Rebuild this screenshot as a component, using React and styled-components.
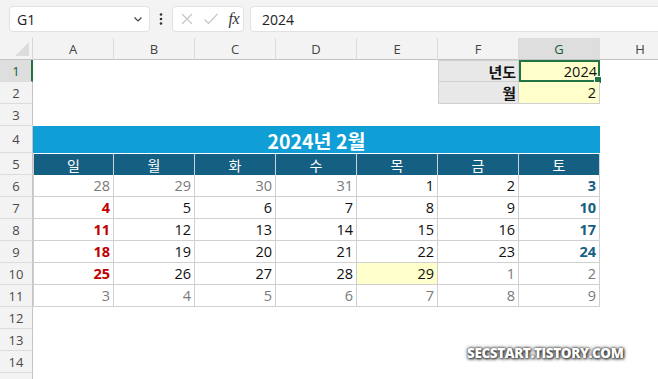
import React from 'react';
import styled, { createGlobalStyle, css } from 'styled-components';

const GlobalStyle = createGlobalStyle`
  html, body {
    margin: 0;
    padding: 0;
    background: #ffffff;
    overflow: hidden;
  }
  body {
    font-family: "Open Sans", "Noto Sans CJK KR", sans-serif;
  }
  * {
    box-sizing: border-box;
  }
`;

const Page = styled.div`
  position: relative;
  width: 658px;
  height: 379px;
  overflow: hidden;
  background: #ffffff;
`;

const Toolbar = styled.div`
  height: 38px;
  background: #f3f3f3;
  display: flex;
  align-items: center;
  padding-left: 9px;
`;

const NameBox = styled.div`
  width: 141px;
  height: 26px;
  background: #fff;
  border: 1px solid #e1e1e1;
  border-radius: 4px;
  display: flex;
  align-items: center;
  justify-content: space-between;
  padding: 0 5px 0 7px;
  font-size: 14px;
  color: #222;
`;

const Kebab = styled.div`
  width: 22px;
  display: flex;
  justify-content: center;
  color: #444;
`;

const FuncBox = styled.div`
  width: 72px;
  height: 26px;
  background: #fff;
  border: 1px solid #e1e1e1;
  border-radius: 4px;
  display: flex;
  align-items: center;
  justify-content: space-between;
  padding: 0 4px 0 7px;
`;

const FxLabel = styled.span`
  font-family: "Liberation Serif", serif;
  font-style: italic;
  font-size: 16px;
  color: #333;
  letter-spacing: -0.5px;
`;

const FormulaInput = styled.div`
  flex: 1;
  height: 26px;
  margin-left: 6px;
  margin-right: -12px;
  background: #fff;
  border: 1px solid #e1e1e1;
  border-radius: 4px;
  display: flex;
  align-items: center;
  padding-left: 11px;
  font-size: 14px;
  color: #222;
`;

const Sheet = styled.div`
  display: grid;
  grid-template-columns: 33px repeat(8, 81px);
  grid-template-rows: 22px 22px 22px 22px 27px repeat(11, 22px);
`;

const Corner = styled.div`
  background: #f3f3f3;
  border-bottom: 1px solid #c4c4c4;
  border-right: 1px solid #d6d6d6;
  position: relative;
  overflow: hidden;
  &::after {
    content: '';
    position: absolute;
    right: 3px;
    bottom: 3px;
    border-style: solid;
    border-width: 0 0 14px 14px;
    border-color: transparent transparent #dcdcdc transparent;
  }
`;

const ColHeader = styled.div`
  background: ${(p) => (p.$active ? '#dedede' : '#f3f3f3')};
  color: ${(p) => (p.$active ? '#185c37' : '#444')};
  border-bottom: 1px solid #c4c4c4;
  border-right: 1px solid #dcdcdc;
  font-size: 13px;
  display: flex;
  align-items: center;
  justify-content: center;
  padding-top: 1px;
`;

const RowHeader = styled.div`
  background: ${(p) => (p.$active ? '#dedede' : '#f3f3f3')};
  color: ${(p) => (p.$active ? '#185c37' : '#4a4a4a')};
  border-bottom: 1px solid #dcdcdc;
  border-right: ${(p) => (p.$active ? '2px solid #217346' : '1px solid #c4c4c4')};
  font-size: 13px;
  display: flex;
  align-items: center;
  justify-content: center;
  padding-left: ${(p) => (p.$active ? '1px' : '0')};
`;

const Cell = styled.div`
  position: relative;
  display: flex;
  align-items: center;
  justify-content: flex-end;
  padding-right: 3px;
  font-size: 14.5px;
  color: #111;
  background: ${(p) => p.$bg || 'transparent'};
  ${(p) =>
    p.$boxed &&
    css`
      border-right: 1px solid #d0d0d0;
      border-bottom: 1px solid #d0d0d0;
    `}
  ${(p) =>
    p.$first &&
    css`
      border-left: 1px solid #d0d0d0;
    `}
`;

const Label = styled(Cell)`
  background: #e8e8e8;
  font-family: "Noto Sans CJK KR", sans-serif;
  font-weight: 700;
  font-size: 15px;
  color: #111;
  padding-right: 2px;
  border-right: 1px solid #d0d0d0;
  border-bottom: 1px solid #d0d0d0;
  border-left: 1px solid #d0d0d0;
  ${(p) =>
    p.$top &&
    css`
      border-top: 1px solid #d0d0d0;
    `}
`;

const InputCell = styled(Cell)`
  background: #ffffcc;
  border-right: 1px solid #d0d0d0;
  border-bottom: 1px solid #d0d0d0;
  ${(p) =>
    p.$selected &&
    css`
      border: 2px solid #217346;
      padding-right: 1px;
      &::after {
        content: '';
        position: absolute;
        right: -4px;
        bottom: -4px;
        width: 6px;
        height: 6px;
        background: #217346;
        border: 1px solid #fff;
      }
    `}
`;

const Title = styled.div`
  grid-column: span 7;
  background: #0f9ed5;
  color: #fff;
  font-family: "Noto Sans CJK KR", sans-serif;
  font-weight: 700;
  font-size: 19.5px;
  display: flex;
  align-items: center;
  justify-content: center;
  padding-top: 1px;
`;

const DayName = styled.div`
  background: #156082;
  color: #fff;
  font-family: "Noto Sans CJK KR", sans-serif;
  font-size: 14px;
  display: flex;
  align-items: center;
  justify-content: center;
  border-right: 1px solid #c8d3da;
  border-top: 1px solid #ffffff;
  ${(p) =>
    p.$first &&
    css`
      border-left: 1px solid #d0d0d0;
    `}
`;

const toneColor = {
  other: '#7a7a7a',
  sun: '#c00000',
  sat: '#156082',
  normal: '#111',
};

const DateCell = styled(Cell)`
  color: ${(p) => toneColor[p.$tone]};
  font-weight: ${(p) => (p.$tone === 'sun' || p.$tone === 'sat' ? 700 : 400)};
`;

const Watermark = styled.div`
  position: absolute;
  left: 467px;
  top: 344px;
  font-family: "Open Sans", sans-serif;
  font-weight: 800;
  font-size: 13.5px;
  letter-spacing: -0.4px;
  color: #ffffff;
  text-shadow: 0 0 2px #333, 1px 1px 3px #222, 0 0 4px #555;
`;

const Chevron = () => (
  <svg width="12" height="12" viewBox="0 0 12 12">
    <path d="M2.5 4.5 L6 8 L9.5 4.5" fill="none" stroke="#444" strokeWidth="1.2" />
  </svg>
);

const Dots = () => (
  <svg width="4" height="14" viewBox="0 0 4 14">
    <circle cx="2" cy="2.5" r="1.3" fill="#333" />
    <circle cx="2" cy="7" r="1.3" fill="#333" />
    <circle cx="2" cy="11.5" r="1.3" fill="#333" />
  </svg>
);

const Cross = () => (
  <svg width="14" height="14" viewBox="0 0 14 14">
    <path d="M2 2 L12 12 M12 2 L2 12" stroke="#c4c4c4" strokeWidth="1.1" fill="none" />
  </svg>
);

const Check = () => (
  <svg width="16" height="14" viewBox="0 0 16 14">
    <path d="M1.5 7.5 L5.5 11.5 L14.5 2" stroke="#c4c4c4" strokeWidth="1.1" fill="none" />
  </svg>
);

const columns = ['A', 'B', 'C', 'D', 'E', 'F', 'G', 'H'];
const days = ['일', '월', '화', '수', '목', '금', '토'];

const weeks = [
  [28, 29, 30, 31, 1, 2, 3],
  [4, 5, 6, 7, 8, 9, 10],
  [11, 12, 13, 14, 15, 16, 17],
  [18, 19, 20, 21, 22, 23, 24],
  [25, 26, 27, 28, 29, 1, 2],
  [3, 4, 5, 6, 7, 8, 9],
];

function toneOf(week, col, day) {
  const other = (week === 0 && day > 20) || (week >= 4 && day < 15);
  if (other) return 'other';
  if (col === 0) return 'sun';
  if (col === 6) return 'sat';
  return 'normal';
}

function Empty({ n }) {
  return Array.from({ length: n }).map((_, i) => <Cell key={'e' + i} />);
}

function App() {
  return (
    <Page>
      <GlobalStyle />
      <Toolbar>
        <NameBox>
          <span>G1</span>
          <Chevron />
        </NameBox>
        <Kebab>
          <Dots />
        </Kebab>
        <FuncBox>
          <Cross />
          <Check />
          <FxLabel>fx</FxLabel>
        </FuncBox>
        <FormulaInput>2024</FormulaInput>
      </Toolbar>

      <Sheet>
        <Corner />
        {columns.map((c) => (
          <ColHeader key={c} $active={c === 'G'}>
            {c}
          </ColHeader>
        ))}

        {/* row 1 */}
        <RowHeader $active>1</RowHeader>
        <Empty n={5} />
        <Label $top>년도</Label>
        <InputCell $selected>2024</InputCell>
        <Cell />

        {/* row 2 */}
        <RowHeader>2</RowHeader>
        <Empty n={5} />
        <Label>월</Label>
        <InputCell>2</InputCell>
        <Cell />

        {/* row 3 */}
        <RowHeader>3</RowHeader>
        <Empty n={8} />

        {/* row 4 */}
        <RowHeader>4</RowHeader>
        <Title>2024년 2월</Title>
        <Cell />

        {/* row 5 */}
        <RowHeader>5</RowHeader>
        {days.map((d, i) => (
          <DayName key={d} $first={i === 0}>
            {d}
          </DayName>
        ))}
        <Cell />

        {weeks.map((week, w) => (
          <React.Fragment key={w}>
            <RowHeader>{w + 6}</RowHeader>
            {week.map((day, c) => (
              <DateCell
                key={c}
                $boxed
                $first={c === 0}
                $tone={toneOf(w, c, day)}
                $bg={w === 4 && c === 4 ? '#ffffcc' : undefined}
              >
                {day}
              </DateCell>
            ))}
            <Cell />
          </React.Fragment>
        ))}

        {[12, 13, 14].map((r) => (
          <React.Fragment key={r}>
            <RowHeader>{r}</RowHeader>
            <Empty n={8} />
          </React.Fragment>
        ))}
        <RowHeader />
        <Empty n={8} />
      </Sheet>

      <Watermark>SECSTART.TISTORY.COM</Watermark>
    </Page>
  );
}

export default App;
